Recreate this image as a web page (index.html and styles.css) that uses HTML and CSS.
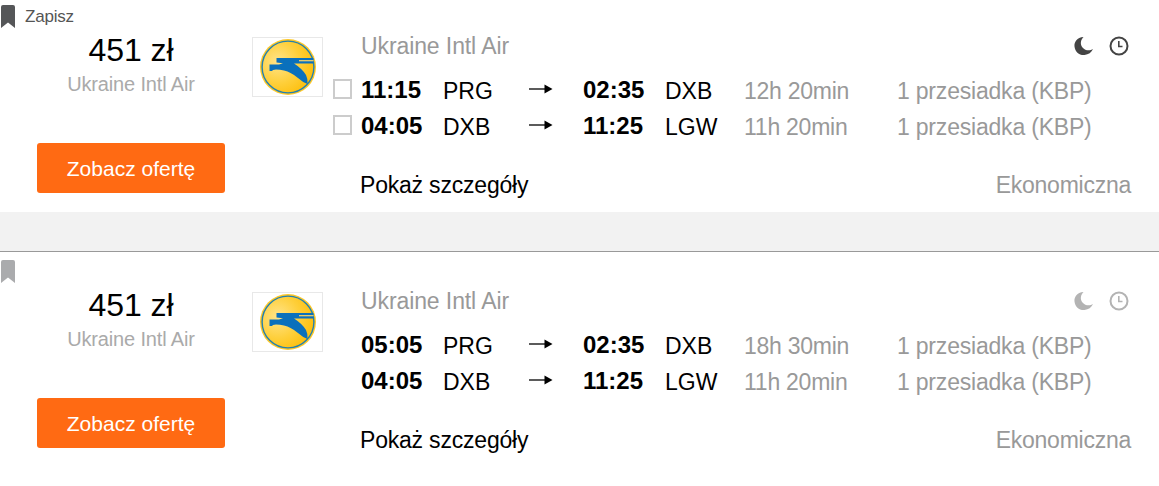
FILE: index.html
```
<!DOCTYPE html>
<html lang="pl">
<head>
  <meta charset="UTF-8">
  <meta name="viewport" content="width=device-width, initial-scale=1.0">
  <title>Wyniki lotów</title>
  <link rel="stylesheet" href="styles.css">
</head>
<body>
  <!-- shared icons -->
  <svg class="sprite" width="0" height="0">
    <defs>
      <radialGradient id="gold" cx="0.3" cy="0.4" r="0.7">
        <stop offset="0" stop-color="#ffe48a"/>
        <stop offset="0.6" stop-color="#fecf3a"/>
        <stop offset="1" stop-color="#fdc010"/>
      </radialGradient>
      <symbol id="bookmark" viewBox="0 0 14 23">
        <path d="M0 2Q0 0 2 0H12Q14 0 14 2V23L7 17.5L0 23Z"/>
      </symbol>
      <symbol id="logo" viewBox="0 0 56 56">
        <circle cx="28" cy="28" r="28" fill="#fdc829"/>
        <circle cx="28" cy="28" r="25.9" fill="url(#gold)" stroke="#2480b0" stroke-width="1.4"/>
        <path fill="#0a70bc" d="M16.500 19H53.500V24.500H34Q42 29.500 46 36Q48 40 47.500 45Q43 43.500 38 39Q31 33 24 31.500Q20 30.500 16 30.500L13 31L12 32H9.500V25.500H19L23 24.300L16.500 23.500Z"/>
        <path d="M39 21.700H53.500" stroke="#fbd668" stroke-width="1.200"/>
      </symbol>
      <symbol id="arrow" viewBox="0 0 24 10">
        <path d="M0 5H17" stroke="#333" stroke-width="1.600"/>
        <path d="M15.500 0.500L23.500 5L15.500 9.500Z"/>
      </symbol>
      <symbol id="moon" viewBox="0 0 20 20">
        <path d="M9.500 1C3 1.500 0 6 0.500 10.500C1 16 5.500 19.500 10.500 19C14.500 18.500 17.500 16.500 19 13C16 15 11.500 15 8.500 11.500C6 8.500 6.500 4 9.500 1Z"/>
      </symbol>
      <symbol id="clock" viewBox="0 0 20 20">
        <circle cx="10" cy="10" r="8.500" fill="none" stroke="currentColor" stroke-width="2"/>
        <path d="M9.800 5V10.500H13.500" fill="none" stroke="currentColor" stroke-width="1.600"/>
      </symbol>
    </defs>
  </svg>

  <div class="result active">
    <div class="offer">
      <div class="save"><svg class="bookmark"><use href="#bookmark"/></svg><span>Zapisz</span></div>
      <div class="price">451 zł</div>
      <div class="provider">Ukraine Intl Air</div>
      <a class="btn">Zobacz ofertę</a>
    </div>
    <div class="logo"><svg width="56" height="56"><use href="#logo"/></svg></div>
    <div class="flight">
      <div class="top">
        <span class="airline">Ukraine Intl Air</span>
        <div class="icons">
          <svg><use href="#moon"/></svg>
          <svg><use href="#clock"/></svg>
        </div>
      </div>
      <div class="leg">
        <span class="check"></span>
        <b>11:15</b><span class="code">PRG</span>
        <svg class="arrow"><use href="#arrow"/></svg>
        <b>02:35</b><span class="code">DXB</span>
        <span class="duration">12h 20min</span>
        <span class="stops">1 przesiadka (KBP)</span>
      </div>
      <div class="leg">
        <span class="check"></span>
        <b>04:05</b><span class="code">DXB</span>
        <svg class="arrow"><use href="#arrow"/></svg>
        <b>11:25</b><span class="code">LGW</span>
        <span class="duration">11h 20min</span>
        <span class="stops">1 przesiadka (KBP)</span>
      </div>
      <div class="bottom">
        <a class="details">Pokaż szczegóły</a>
        <span class="cabin">Ekonomiczna</span>
      </div>
    </div>
  </div>

  <div class="result next">
    <div class="offer">
      <div class="save"><svg class="bookmark"><use href="#bookmark"/></svg></div>
      <div class="price">451 zł</div>
      <div class="provider">Ukraine Intl Air</div>
      <a class="btn">Zobacz ofertę</a>
    </div>
    <div class="logo"><svg width="56" height="56"><use href="#logo"/></svg></div>
    <div class="flight">
      <div class="top">
        <span class="airline">Ukraine Intl Air</span>
        <div class="icons">
          <svg><use href="#moon"/></svg>
          <svg><use href="#clock"/></svg>
        </div>
      </div>
      <div class="leg">
        <span></span>
        <b>05:05</b><span class="code">PRG</span>
        <svg class="arrow"><use href="#arrow"/></svg>
        <b>02:35</b><span class="code">DXB</span>
        <span class="duration">18h 30min</span>
        <span class="stops">1 przesiadka (KBP)</span>
      </div>
      <div class="leg">
        <span></span>
        <b>04:05</b><span class="code">DXB</span>
        <svg class="arrow"><use href="#arrow"/></svg>
        <b>11:25</b><span class="code">LGW</span>
        <span class="duration">11h 20min</span>
        <span class="stops">1 przesiadka (KBP)</span>
      </div>
      <div class="bottom">
        <a class="details">Pokaż szczegóły</a>
        <span class="cabin">Ekonomiczna</span>
      </div>
    </div>
  </div>
</body>
</html>
```
FILE: styles.css
```
* {
  box-sizing: border-box;
}
body {
  margin: 0;
  background: #f2f2f2;
  font-family: "Liberation Sans", Arial, sans-serif;
  font-size: 23px;
  color: #000;
}
.sprite {
  position: absolute;
}
svg {
  display: block;
}
.result {
  display: flex;
  height: 212px;
  background: #fff;
}
.next {
  height: 235px;
  margin-top: 39px;
  padding-top: 3px;
  border-top: 1px solid #999;
}
.offer {
  width: 252px;
}
.save {
  display: flex;
  height: 32px;
  padding: 5px 0 0 1px;
  color: #555;
  font-size: 17px;
  line-height: 23px;
  letter-spacing: -0.2px;
}
.bookmark {
  width: 14px;
  height: 23px;
  margin-right: 10px;
  fill: #aaabad;
}
.active .bookmark {
  fill: #555658;
}
.price {
  width: 262px;
  height: 37px;
  font-size: 32px;
  line-height: 37px;
  letter-spacing: -0.1px;
  text-align: center;
}
.provider {
  width: 262px;
  height: 30px;
  font-size: 20px;
  line-height: 30px;
  letter-spacing: -0.15px;
  text-align: center;
  color: #aaa;
}
.btn {
  display: block;
  width: 188px;
  height: 50px;
  margin: 44px 0 0 37px;
  background: #ff6a13;
  border-radius: 3px;
  color: #fff;
  font-size: 21px;
  line-height: 52px;
  text-align: center;
}
.logo {
  display: flex;
  align-items: center;
  justify-content: center;
  width: 71px;
  height: 60px;
  margin-top: 37px;
  border: 1px solid #e8e8e8;
}
.flight {
  width: 836px;
  padding-top: 28px;
}
.top {
  display: flex;
  justify-content: space-between;
  height: 44px;
  padding: 0 30px 0 38px;
  line-height: 36px;
}
.airline {
  letter-spacing: -0.1px;
  color: #999;
}
.icons {
  display: flex;
  gap: 15px;
  padding-top: 8px;
  color: #b3b3b3;
}
.active .icons {
  color: #444;
}
.icons svg {
  width: 20px;
  height: 20px;
  fill: currentColor;
}
.leg {
  display: grid;
  grid-template-columns: 28px 82px 86px 54px 82px 79px 153px auto;
  height: 36px;
  padding-left: 10px;
  line-height: 38px;
}
.leg b {
  font-size: 24px;
  line-height: 36px;
}
.check {
  width: 19px;
  height: 20px;
  margin-top: 7px;
  border: 2px solid #ccc;
}
.arrow {
  width: 24px;
  height: 10px;
  margin-top: 12px;
}
.duration {
  letter-spacing: -0.25px;
  color: #999;
}
.stops {
  letter-spacing: -0.2px;
  color: #999;
}
.bottom {
  display: flex;
  justify-content: space-between;
  padding: 22px 28px 0 37px;
  line-height: 38px;
}
.details {
  letter-spacing: -0.2px;
}
.cabin {
  letter-spacing: -0.25px;
  color: #999;
}
```
